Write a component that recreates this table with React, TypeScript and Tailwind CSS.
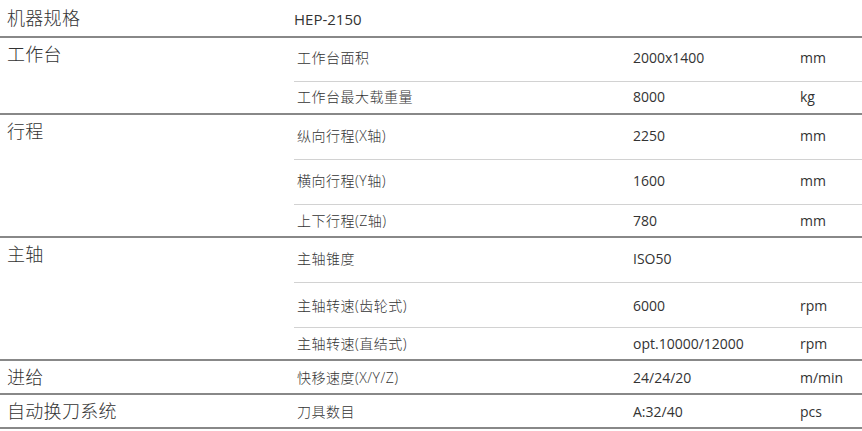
import React from 'react';

type Row = { name: string; value: string; unit: string; h: string };
type Group = { label: string; rows: Row[] };

const groups: Group[] = [
  {
    label: '工作台',
    rows: [
      { name: '工作台面积', value: '2000x1400', unit: 'mm', h: 'h-[44px] pb-[4px]' },
      { name: '工作台最大载重量', value: '8000', unit: 'kg', h: 'h-[31px] pb-[2px]' },
    ],
  },
  {
    label: '行程',
    rows: [
      { name: '纵向行程(X轴)', value: '2250', unit: 'mm', h: 'h-[45px] pb-[4px]' },
      { name: '横向行程(Y轴)', value: '1600', unit: 'mm', h: 'h-[45px] pb-[3px]' },
      { name: '上下行程(Z轴)', value: '780', unit: 'mm', h: 'h-[31px]' },
    ],
  },
  {
    label: '主轴',
    rows: [
      { name: '主轴锥度', value: 'ISO50', unit: '', h: 'h-[45px] pb-[4px]' },
      { name: '主轴转速(齿轮式)', value: '6000', unit: 'rpm', h: 'h-[45px]' },
      { name: '主轴转速(直结式)', value: 'opt.10000/12000', unit: 'rpm', h: 'h-[31px]' },
    ],
  },
  {
    label: '进给',
    rows: [{ name: '快移速度(X/Y/Z)', value: '24/24/20', unit: 'm/min', h: 'h-[32px]' }],
  },
  {
    label: '自动换刀系统',
    rows: [{ name: '刀具数目', value: 'A:32/40', unit: 'pcs', h: 'h-[32px]' }],
  },
];

const App = () => {
  return (
    <div className="w-[862px] bg-white text-[#333] font-['Open_Sans','Noto_Sans_CJK_SC',sans-serif]">
      {/* Header */}
      <div className="flex h-[38px] items-center border-b-2 border-[#888]">
        <div className="w-[294px] pl-[7px] text-[18px] leading-[24px] font-light tracking-[0.3px]">机器规格</div>
        <div className="text-[15px] pt-[3px]">HEP-2150</div>
      </div>

      {groups.map((group) => (
        <div key={group.label} className="flex border-b-2 border-[#888]">
          <div className="w-[294px] pl-[7px] pt-[4px] text-[18px] leading-[24px] font-light tracking-[0.3px]">
            {group.label}
          </div>
          <div className="flex flex-1 flex-col">
            {group.rows.map((row, i) => (
              <div
                key={row.name}
                className={`flex items-center text-[14px] ${row.h} ${
                  i < group.rows.length - 1 ? 'border-b border-[#d2d2d2]' : ''
                }`}
              >
                <div className="w-[339px] pl-[3px] tracking-[0.5px] font-light">{row.name}</div>
                <div className="w-[167px]">{row.value}</div>
                <div>{row.unit}</div>
              </div>
            ))}
          </div>
        </div>
      ))}
    </div>
  );
};

export default App;
